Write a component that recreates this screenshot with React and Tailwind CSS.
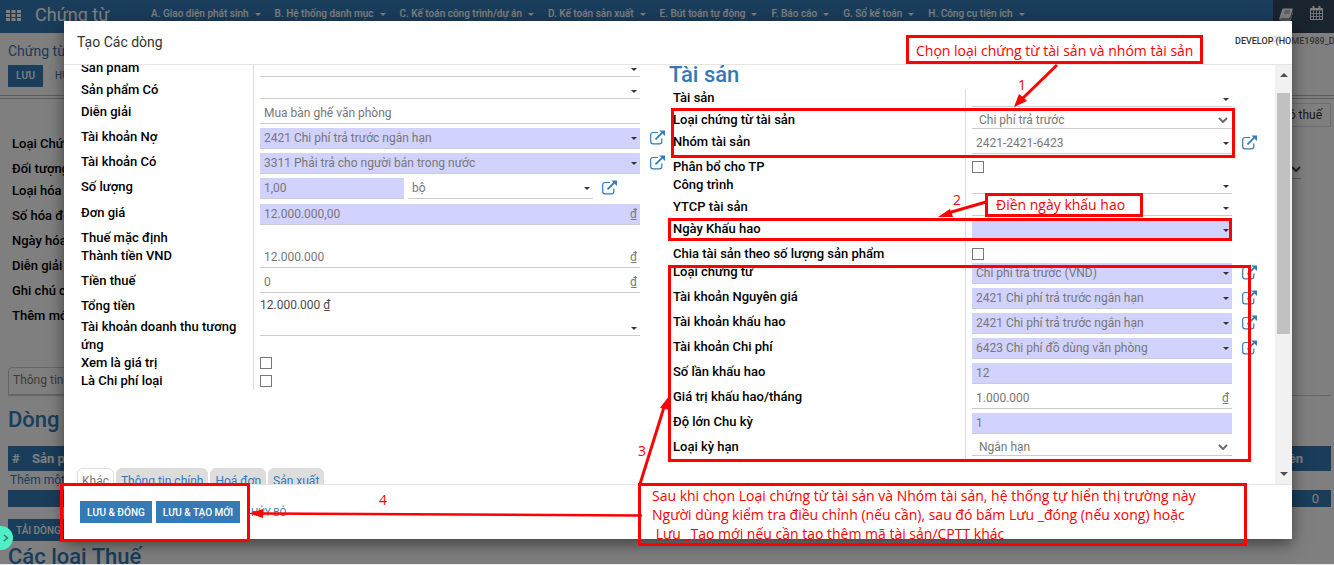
const MENU = [
    'A. Giao diện phát sinh',
    'B. Hệ thống danh mục',
    'C. Kế toán công trình/dự án',
    'D. Kế toán sản xuất',
    'E. Bút toán tự động',
    'F. Báo cáo',
    'G. Sổ kế toán',
    'H. Công cụ tiện ích',
];

const LEFT_ROWS = [
    { label: 'Sản phẩm', type: 'm2o', small: true },
    { label: 'Sản phẩm Có', type: 'm2o', small: true },
    { label: 'Diễn giải', type: 'text', value: 'Mua bàn ghế văn phòng' },
    { label: 'Tài khoản Nợ', type: 'm2o', value: '2421 Chi phí trả trước ngắn hạn', required: true, link: true },
    { label: 'Tài khoản Có', type: 'm2o', value: '3311 Phải trả cho người bán trong nước', required: true, link: true },
    { label: 'Số lượng', type: 'qty' },
    { label: 'Đơn giá', type: 'text', value: '12.000.000,00', required: true, money: true },
    { label: 'Thuế mặc định', type: 'none' },
    { label: 'Thành tiền VND', type: 'text', value: '12.000.000', money: true },
    { label: 'Tiền thuế', type: 'text', value: '0', money: true },
    { label: 'Tổng tiền', type: 'readonly', value: '12.000.000 ₫' },
    { label: 'Tài khoản doanh thu tương ứng', type: 'm2o', small: true },
    { label: 'Xem là giá trị', type: 'check' },
    { label: 'Là Chi phí loại', type: 'check' },
];

const RIGHT_ROWS = [
    { label: 'Tài sản', type: 'm2o', small: true },
    { label: 'Loại chứng từ tài sản', type: 'select', value: 'Chi phí trả trước', small: true },
    { label: 'Nhóm tài sản', type: 'm2o', value: '2421-2421-6423', link: true },
    { label: 'Phân bổ cho TP', type: 'check' },
    { label: 'Công trình', type: 'm2o', small: true },
    { label: 'YTCP tài sản', type: 'm2o', small: true },
    { label: 'Ngày Khấu hao', type: 'm2o', required: true },
    { label: 'Chia tài sản theo số lượng sản phẩm', type: 'check' },
    { label: 'Loại chứng từ', type: 'm2o', value: 'Chi phí trả trước (VND)', required: true, link: true },
    { label: 'Tài khoản Nguyên giá', type: 'm2o', value: '2421 Chi phí trả trước ngắn hạn', required: true, link: true },
    { label: 'Tài khoản khấu hao', type: 'm2o', value: '2421 Chi phí trả trước ngắn hạn', required: true, link: true },
    { label: 'Tài khoản Chi phí', type: 'm2o', value: '6423 Chi phí đồ dùng văn phòng', required: true, link: true },
    { label: 'Số lần khấu hao', type: 'text', value: '12', required: true },
    { label: 'Giá trị khấu hao/tháng', type: 'text', value: '1.000.000', money: true },
    { label: 'Độ lớn Chu kỳ', type: 'text', value: '1', required: true },
    { label: 'Loại kỳ hạn', type: 'select', value: 'Ngắn hạn', small: true },
];

const PAGE_LABELS = [
    { label: 'Loại Chứng từ' },
    { label: 'Đối tượng', small: true },
    { label: 'Loại hóa đơn' },
    { label: 'Số hóa đơn' },
    { label: 'Ngày hóa đơn' },
    { label: 'Diễn giải' },
    { label: 'Ghi chú chung' },
    { label: 'Thêm mới' },
];

function ExternalLink() {
    return (
        <button type="button" aria-label="Mở" className="block h-[15px] w-[15px] text-[#337ab7]">
            <svg viewBox="0 0 15 15" className="h-[15px] w-[15px]" fill="none">
                <path d="M8 2.5H3A2.300 2.300 0 0 0 .7 4.800V11.500A2.300 2.300 0 0 0 3 13.800H9.500A2.300 2.300 0 0 0 11.800 11.500V8.500" stroke="currentColor" strokeWidth="1.200" />
                <path d="M5.500 9.300L12 2.800" stroke="currentColor" strokeWidth="1.800" />
                <path d="M9.300 .4H15V6.100Z" fill="currentColor" />
            </svg>
        </button>
    );
}

function BookIcon() {
    return (
        <svg viewBox="0 0 14 13" className="h-[13px] w-[14px]" fill="currentColor">
            <path d="M4.800 .5H13.200Q14 .7 13.700 1.600L11.200 9.600Q10.900 10.400 10 10.400H2Q1.200 10.500 1.200 11.100Q1.300 11.600 2.100 11.600H10.800L11.600 10.800L13.900 3.300V4.500L11.900 11.500Q11.500 12.600 10.500 12.600H1.800Q.2 12.300 .2 10.600L3 1.800Q3.500 .6 4.800 .5Z" />
            <path d="M5.600 3H11M5 5H10.400" stroke="#34495e" strokeWidth=".7" />
        </svg>
    );
}

function CalendarIcon() {
    return (
        <svg viewBox="0 0 13 14" className="h-[14px] w-[13px]" fill="none" stroke="currentColor">
            <path d="M.5 2.500H12.500V13.500H.5Z" />
            <path d="M.5 3.500H12.500" strokeWidth="2" />
            <path d="M3.500 0V3.500M9.500 0V3.500" strokeWidth="2" />
            <path d="M.5 7.500H12.500M.5 10.500H12.500M3.500 5V13.500M6.500 5V13.500M9.500 5V13.500" strokeWidth=".8" />
        </svg>
    );
}

function Caret({ className }) {
    return (
        <svg viewBox="0 0 6 3" className={`pointer-events-none absolute h-[3px] w-[6px] ${className}`} fill="currentColor">
            <path d="M0 0h6L3 3z" />
        </svg>
    );
}

function Dropdown({ id, row }) {
    const native = row.type === 'select';
    return (
        <div className="relative">
            <select
                id={id}
                aria-label={row.label}
                defaultValue={row.value || ''}
                className={`block w-full appearance-none border-b border-[#ccc] text-[12px] leading-4 text-[#777] outline-none ${
                    native ? 'pl-[7px]' : 'pl-1'
                } ${row.small ? 'h-[18px]' : 'h-[21px]'} ${row.required ? 'bg-[#d2d2ff]' : 'bg-transparent'}`}
            >
                <option value={row.value || ''}>{row.value || ''}</option>
            </select>
            {native ? (
                <svg viewBox="0 0 10 6" className="pointer-events-none absolute top-[6px] right-1 h-[6px] w-[10px]" fill="none">
                    <path d="M1 1l4 4 4-4" stroke="#6b6b6b" strokeWidth="2" />
                </svg>
            ) : (
                <Caret className="top-[9px] right-[3px] text-[#333]" />
            )}
        </div>
    );
}

function TextField({ id, row }) {
    return (
        <div className={`flex h-[21px] items-center border-b border-[#ccc] pr-[3px] pl-1 text-[12px] text-[#777] ${row.required ? 'bg-[#d2d2ff]' : ''}`}>
            <input id={id} aria-label={row.label} defaultValue={row.value} className="h-[18px] w-full min-w-0 bg-transparent outline-none" />
            {row.money && <span>₫</span>}
        </div>
    );
}

function Field({ id, row }) {
    if (row.type === 'm2o' || row.type === 'select') return <Dropdown id={id} row={row} />;
    if (row.type === 'text') return <TextField id={id} row={row} />;
    if (row.type === 'readonly') return <output id={id} className="block h-[17px] text-[12px] leading-4 text-[#4c4c4c]">{row.value}</output>;
    if (row.type === 'check') {
        return <input id={id} type="checkbox" className="mt-[3px] block h-3 w-3 appearance-none border border-[#777] bg-white" />;
    }
    return null;
}

function Quantity({ id }) {
    return (
        <div className="flex flex-1 pb-[5px]">
            <div className="w-36">
                <TextField id={id} row={{ label: 'Số lượng', value: '1,00', required: true }} />
            </div>
            <div className="ml-1 flex-1">
                <Dropdown id={`${id}-unit`} row={{ label: 'Đơn vị', type: 'm2o', value: 'bộ' }} />
            </div>
            <div className="w-[47px] pt-[2px] pl-[9px]">
                <ExternalLink />
            </div>
        </div>
    );
}

function Group({ name, rows, labelWidth }) {
    return (
        <div className="pl-1">
            {rows.map((row, i) => {
                const id = `${name}-${i}`;
                const pad = row.type === 'check' || row.type === 'none' ? '' : 'pb-1';
                return (
                    <div key={id} className="flex min-h-[18px]">
                        <div className={`shrink-0 border-r border-[#ddd] pr-2 text-[13px] leading-[18px] font-medium text-black ${labelWidth}`}>
                            {row.type === 'none' ? <span>{row.label}</span> : <label htmlFor={id}>{row.label}</label>}
                        </div>
                        <div className="flex min-w-0 flex-1 pl-[6px]">
                            {row.type === 'qty' ? (
                                <Quantity id={id} />
                            ) : (
                                <div className={`min-w-0 flex-1 ${pad}`}>
                                    <Field id={id} row={row} />
                                </div>
                            )}
                            <div className="w-[29px] shrink-0 pt-[2px] pl-[10px]">{row.link && <ExternalLink />}</div>
                        </div>
                    </div>
                );
            })}
        </div>
    );
}

function Modal() {
    return (
        <div role="dialog" aria-label="Tạo Các dòng" className="relative mt-[21px] mr-[42px] ml-16 bg-white shadow-[0_5px_15px_rgba(0,0,0,0.5)]">
            <header className="flex h-11 items-center border-b border-[#e5e5e5] px-[13px]">
                <h4 className="text-[14px] text-[#333]">Tạo Các dòng</h4>
            </header>

            <div className="flex h-[419px] overflow-hidden">
                <div className="min-w-0 flex-1 pr-[14px] pl-[13px]">
                    <div className="-mt-[6px] grid grid-cols-2">
                        <Group name="line" rows={LEFT_ROWS} labelWidth="w-[173px]" />
                        <div>
                            <h2 className="h-[30px] text-[22px] leading-8 font-medium text-[#337ab7]">Tài sản</h2>
                            <Group name="asset" rows={RIGHT_ROWS} labelWidth="w-[293px]" />
                        </div>
                    </div>
                    <nav className="mt-2 flex gap-[2px] text-[12px] leading-6">
                        <a href="#khac" className="rounded-t-md border border-[#ddd] px-1 text-[#777]">Khác</a>
                        <a href="#chinh" className="rounded-t-md border border-[#ddd] bg-[#ddd] px-1 text-[#337ab7]">Thông tin chính</a>
                        <a href="#hoadon" className="rounded-t-md border border-[#ddd] bg-[#ddd] px-1 text-[#337ab7]">Hoá đơn</a>
                        <a href="#sanxuat" className="rounded-t-md border border-[#ddd] bg-[#ddd] px-1 text-[#337ab7]">Sản xuất</a>
                    </nav>
                </div>

                {/* Scrollbar */}
                <div className="flex w-[17px] flex-col items-center bg-[#f1f1f1] text-[#505050]">
                    <svg viewBox="0 0 8 4" className="mt-2 h-1 w-2" fill="currentColor"><path d="M0 4h8L4 0z" /></svg>
                    <div className="mt-4 h-[241px] w-[13px] bg-[#c1c1c1]" />
                    <svg viewBox="0 0 8 4" className="mt-auto mb-2 h-1 w-2" fill="currentColor"><path d="M0 0h8L4 4z" /></svg>
                </div>
            </div>

            <footer className="flex h-[55px] items-center gap-1 border-t border-[#e5e5e5] px-4 text-[10px] font-medium">
                <button type="button" className="h-[22px] bg-[#337ab7] px-[7px] text-white">LƯU & ĐÓNG</button>
                <button type="button" className="h-[22px] bg-[#337ab7] px-[7px] text-white">LƯU & TẠO MỚI</button>
                <button type="button" className="h-[22px] px-[7px] font-normal text-[#337ab7]">HỦY BỎ</button>
            </footer>
        </div>
    );
}

function Page() {
    return (
        <div className="absolute inset-0 overflow-hidden bg-white">
            <header className="flex h-[33px] bg-[#337ab7] text-white">
                <button type="button" aria-label="Ứng dụng" className="mt-[9px] ml-[6px] h-3 w-4">
                    <svg viewBox="0 0 15 11" className="h-[11px] w-[15px]" fill="currentColor">
                        <path d="M0 0h4v3H0zM5.500 0h4v3h-4zM11 0h4v3h-4zM0 4h4v3H0zM5.500 4h4v3h-4zM11 4h4v3h-4zM0 8h4v3H0zM5.500 8h4v3h-4zM11 8h4v3h-4z" />
                    </svg>
                </button>
                <h1 className="ml-[13px] w-[116px] text-[18px] leading-[30px]">Chứng từ</h1>
                <nav className="flex flex-1 gap-[14px] text-[10px] leading-7 font-medium">
                    {MENU.map((item) => (
                        <a key={item} href="#menu" className="relative pr-3 whitespace-nowrap">
                            {item}
                            <Caret className="top-[13px] right-0" />
                        </a>
                    ))}
                </nav>
                <div className="flex w-[61px] justify-between bg-[#34495e] pt-[6px] pr-[11px] pl-[6px]">
                    <div className="pt-[2px]"><BookIcon /></div>
                    <CalendarIcon />
                </div>
            </header>

            <div className="h-[63px] border-b border-[#bbb] px-2 text-[#337ab7]">
                <p className="pt-[7px] text-[14px] leading-[22px]">Chứng từ / Mới</p>
                <div className="mt-[3px] flex gap-1 text-[10px] leading-[22px]">
                    <button type="button" className="bg-[#337ab7] px-2 font-medium text-white">LƯU</button>
                    <button type="button" className="px-2">HỦY BỎ</button>
                </div>
            </div>

            <main className="mt-[2px] border-t border-[#bbb] px-2">
                <div className="-mx-[5px] flex justify-end pt-1">
                    <button type="button" className="h-6 border border-[#ddd] px-2 text-[12px] text-[#333]">Hóa đơn có thuế</button>
                </div>
                <div className="mt-2 pl-1 text-[13px] leading-[18px] font-medium text-black">
                    {PAGE_LABELS.map(({ label, small }) => (
                        <p key={label} className={small ? 'pb-1' : 'pb-[7px]'}>{label}</p>
                    ))}
                </div>
                <div className="mt-[35px] -mr-[5px] border-b border-[#ccc]">
                    <a href="#info" className="block h-7 w-24 rounded-t border border-[#ccc] px-1 text-[12px] leading-6 text-[#777]">Thông tin</a>
                </div>
                <h2 className="mt-2 text-[22px] leading-8 font-medium text-[#337ab7]">Dòng</h2>
                <table className="mt-[10px] w-[calc(100%+5px)] text-[13px]">
                    <thead>
                        <tr className="h-[25px] bg-[#337ab7] text-left text-white">
                            <th className="w-6 pl-1">#</th>
                            <th>Sản phẩm</th>
                            <th className="pr-7 text-right">Tiền</th>
                        </tr>
                    </thead>
                    <tbody>
                        <tr className="h-[19px]">
                            <td colSpan={3} className="pl-[2px] text-[12px] leading-[19px]"><a href="#add" className="text-[#337ab7]">Thêm một mục</a></td>
                        </tr>
                        <tr className="h-[17px] bg-[#337ab7] text-white">
                            <td colSpan={3} className="pr-3 text-right leading-[17px]">0</td>
                        </tr>
                    </tbody>
                </table>
                <button type="button" className="mt-3 block h-[22px] bg-[#337ab7] px-2 text-[10px] font-medium text-white">TẢI DÒNG CHỨNG TỪ</button>
                <h2 className="text-[22px] leading-8 font-medium text-[#337ab7]">Các loại Thuế</h2>
            </main>

            <svg viewBox="0 0 10 6" className="absolute top-[166px] right-[33px] h-[6px] w-[10px]" fill="none">
                <path d="M1 1l4 4 4-4" stroke="#444" strokeWidth="2" />
            </svg>
            <div className="absolute top-[178px] right-[33px] w-20 border-b border-[#bbb]" />
        </div>
    );
}

/* Guide drawn on top of the form: frames, arrows and notes */
function Guide() {
    return (
        <div className="pointer-events-none absolute inset-0 font-['Open_Sans',sans-serif] text-[14px] text-[#f00]">
            <div className="absolute top-[108px] left-[671px] h-[50px] w-[564px] border-3 border-[#f00]" />
            <div className="absolute top-[218px] left-[668px] h-[23px] w-[564px] border-3 border-[#f00]" />
            <div className="absolute top-[265px] left-[668px] h-[197px] w-[583px] border-3 border-[#f00]" />
            <div className="absolute top-[483px] left-[60px] h-[59px] w-[190px] border-3 border-[#f00]" />

            <p className="absolute top-[35px] left-[906px] h-[29px] w-[297px] border-3 border-[#f00] pl-[7px] leading-[26px] whitespace-nowrap">
                Chọn loại chứng từ tài sản và nhóm tài sản
            </p>
            <p className="absolute top-[193px] left-[985px] h-[24px] w-[158px] border-3 border-[#f00] bg-white pl-2 leading-[18px] whitespace-nowrap">
                Điền ngày khấu hao
            </p>
            <p className="absolute top-[483px] left-[638px] h-[63px] w-[609px] border-3 border-[#f00] pl-[11px] leading-[19px] whitespace-pre">
                {'Sau khi chọn Loại chứng từ tài sản và Nhóm tài sản, hệ thống tự hiển thị trường này\nNgười dùng kiểm tra điều chỉnh (nếu cần), sau đó bấm Lưu _đóng (nếu xong) hoặc\n Lưu _Tạo mới nếu cần tạo thêm mã tài sản/CPTT khác'}
            </p>

            <span className="absolute top-[74px] left-[1018px]">1</span>
            <span className="absolute top-[189px] left-[953px]">2</span>
            <span className="absolute top-[440px] left-[638px]">3</span>
            <span className="absolute top-[489px] left-[379px]">4</span>

            <svg viewBox="0 0 1334 564" className="absolute top-0 left-0 h-[564px] w-[1334px]" fill="#f00">
                <g stroke="#f00" strokeWidth="3">
                    <path d="M1057 65L1022 99" />
                    <path d="M986 202L948 213" />
                    <path d="M640 484L665 404" />
                    <path d="M642 515.500L262 513.500" strokeWidth="2.500" />
                </g>
                <path d="M1014 107L1019 94L1023 97L1027 101Z" />
                <path d="M938 217L950 209L953 217Z" />
                <path d="M669 396L660 408L670 410Z" />
                <path d="M249 513.500L263 509V518Z" />
            </svg>
        </div>
    );
}

export default function App() {
    return (
        <div className="h-screen bg-[#e8e8e8] pb-px font-['Roboto',sans-serif]">
            <div className="relative h-full overflow-hidden">
                <Page />
                <div className="absolute inset-0 bg-black/50" />
                <div className="relative flow-root">
                    <Modal />
                </div>
                <button type="button" aria-label="Đóng" className="absolute top-[35px] right-[53px] h-2 w-2">
                    <svg viewBox="0 0 8 8" className="h-2 w-2" fill="none"><path d="M1 1l6 6M7 1L1 7" stroke="#ccc" strokeWidth="1.500" /></svg>
                </button>
                <span className="absolute top-[35px] right-0 w-[99px] overflow-hidden text-[9px] leading-3 font-medium whitespace-nowrap text-[#333]">
                    DEVELOP (HOME1989_DEV)
                </span>
                <button type="button" aria-label="Mở rộng" className="absolute top-[526px] -left-3 flex h-6 w-[25px] items-center justify-end rounded-full bg-[#4ef0c5] pr-1">
                    <svg viewBox="0 0 6 8" className="h-2 w-[6px]" fill="none"><path d="M1 1l3.500 3L1 7" stroke="#3b6b60" strokeWidth="1.300" /></svg>
                </button>
                <Guide />
            </div>
        </div>
    );
}
